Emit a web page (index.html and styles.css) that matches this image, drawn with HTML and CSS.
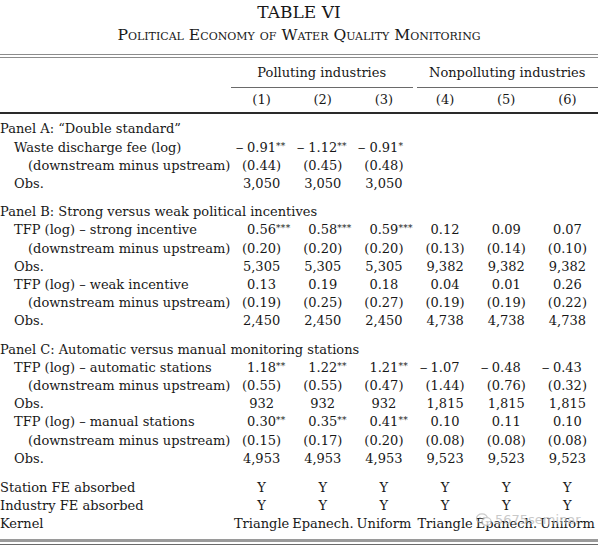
FILE: index.html
```html
<!DOCTYPE html>
<html>
<head>
<meta charset="utf-8">
<link rel="stylesheet" href="styles.css">
</head>
<body>
<div class="page">
  <div class="caption">TABLE VI</div>
  <div class="subtitle">Political Economy of Water Quality Monitoring</div>
  <table class="tbl">
    <colgroup>
      <col class="c-label"><col class="c-num"><col class="c-num"><col class="c-num"><col class="c-num"><col class="c-num"><col class="c-num">
    </colgroup>
    <thead>
      <tr class="grp">
        <th></th>
        <th colspan="3"><div class="grp-l">Polluting industries</div></th>
        <th colspan="3"><div class="grp-r">Nonpolluting industries</div></th>
      </tr>
      <tr class="nums">
        <th></th><th>(1)</th><th>(2)</th><th>(3)</th><th>(4)</th><th>(5)</th><th>(6)</th>
      </tr>
    </thead>
    <tbody>
      <tr class="panel first"><td colspan="7">Panel A: “Double standard”</td></tr>
      <tr><td class="l1">Waste discharge fee (log)</td><td><span class="m">–</span>0.91<span class="s">**</span></td><td><span class="m">–</span>1.12<span class="s">**</span></td><td><span class="m">–</span>0.91<span class="s">*</span></td><td></td><td></td><td></td></tr>
      <tr><td class="l2">(downstream minus upstream)</td><td>(0.44)</td><td>(0.45)</td><td>(0.48)</td><td></td><td></td><td></td></tr>
      <tr><td class="l1">Obs.</td><td>3,050</td><td>3,050</td><td>3,050</td><td></td><td></td><td></td></tr>

      <tr class="panel"><td colspan="7">Panel B: Strong versus weak political incentives</td></tr>
      <tr><td class="l1">TFP (log) – strong incentive</td><td>0.56<span class="s">***</span></td><td>0.58<span class="s">***</span></td><td>0.59<span class="s">***</span></td><td>0.12</td><td>0.09</td><td>0.07</td></tr>
      <tr><td class="l2">(downstream minus upstream)</td><td>(0.20)</td><td>(0.20)</td><td>(0.20)</td><td>(0.13)</td><td>(0.14)</td><td>(0.10)</td></tr>
      <tr><td class="l1">Obs.</td><td>5,305</td><td>5,305</td><td>5,305</td><td>9,382</td><td>9,382</td><td>9,382</td></tr>
      <tr><td class="l1">TFP (log) – weak incentive</td><td>0.13</td><td>0.19</td><td>0.18</td><td>0.04</td><td>0.01</td><td>0.26</td></tr>
      <tr><td class="l2">(downstream minus upstream)</td><td>(0.19)</td><td>(0.25)</td><td>(0.27)</td><td>(0.19)</td><td>(0.19)</td><td>(0.22)</td></tr>
      <tr><td class="l1">Obs.</td><td>2,450</td><td>2,450</td><td>2,450</td><td>4,738</td><td>4,738</td><td>4,738</td></tr>

      <tr class="panel"><td colspan="7">Panel C: Automatic versus manual monitoring stations</td></tr>
      <tr><td class="l1">TFP (log) – automatic stations</td><td>1.18<span class="s">**</span></td><td>1.22<span class="s">**</span></td><td>1.21<span class="s">**</span></td><td><span class="m">–</span>1.07</td><td><span class="m">–</span>0.48</td><td><span class="m">–</span>0.43</td></tr>
      <tr><td class="l2">(downstream minus upstream)</td><td>(0.55)</td><td>(0.55)</td><td>(0.47)</td><td>(1.44)</td><td>(0.76)</td><td>(0.32)</td></tr>
      <tr><td class="l1">Obs.</td><td>932</td><td>932</td><td>932</td><td>1,815</td><td>1,815</td><td>1,815</td></tr>
      <tr><td class="l1">TFP (log) – manual stations</td><td>0.30<span class="s">**</span></td><td>0.35<span class="s">**</span></td><td>0.41<span class="s">**</span></td><td>0.10</td><td>0.11</td><td>0.10</td></tr>
      <tr><td class="l2">(downstream minus upstream)</td><td>(0.15)</td><td>(0.17)</td><td>(0.20)</td><td>(0.08)</td><td>(0.08)</td><td>(0.08)</td></tr>
      <tr><td class="l1">Obs.</td><td>4,953</td><td>4,953</td><td>4,953</td><td>9,523</td><td>9,523</td><td>9,523</td></tr>

      <tr class="panel fe"><td>Station FE absorbed</td><td>Y</td><td>Y</td><td>Y</td><td>Y</td><td>Y</td><td>Y</td></tr>
      <tr><td>Industry FE absorbed</td><td>Y</td><td>Y</td><td>Y</td><td>Y</td><td>Y</td><td>Y</td></tr>
      <tr><td>Kernel</td><td>Triangle</td><td>Epanech.</td><td>Uniform</td><td>Triangle</td><td>Epanech.</td><td>Uniform</td></tr>
    </tbody>
  </table>
  <div class="bottom-rule"></div>
  <div class="watermark">
    <svg class="wm-icon" width="16" height="14" viewBox="0 0 16 14">
      <ellipse cx="6" cy="5.5" rx="5.5" ry="4.6" fill="none" stroke="#bbb" stroke-width="1.2"/>
      <ellipse cx="10.5" cy="8.5" rx="4.6" ry="3.9" fill="#fff" stroke="#bbb" stroke-width="1.2"/>
      <circle cx="4" cy="4.5" r="0.8" fill="#bbb"/><circle cx="8" cy="4.5" r="0.8" fill="#bbb"/>
    </svg>
    <span class="wm-text">5675seminar</span>
  </div>
</div>
</body>
</html>
```
FILE: styles.css
```css
html, body {
  margin: 0;
  padding: 0;
  background: #fff;
}
.page {
  position: relative;
  width: 598px;
  font-family: "DejaVu Serif", "Liberation Serif", serif;
  color: #181818;
  font-size: 13px;
}
.caption {
  padding-top: 2px;
  line-height: 20px;
  font-size: 17px;
  text-align: center;
}
.subtitle {
  margin-top: 3px;
  line-height: 20px;
  font-size: 15.6px;
  text-align: center;
  font-variant: small-caps;
}
.tbl {
  margin-top: 9px;
  width: 598px;
  border-collapse: collapse;
  table-layout: fixed;
  border-top: 4px double #8c8c8c;
}
.c-label { width: 231px; }
.c-num { width: 61.17px; }
.tbl th, .tbl td {
  padding: 0;
  font-weight: normal;
  line-height: 18.2px;
  white-space: nowrap;
  text-align: center;
}
.tbl td:first-child { text-align: left; }
.grp th { padding-top: 6px; }
.grp-l, .grp-r {
  padding-bottom: 5px;
  border-bottom: 1px solid #6a6a6a;
}
.grp-l { margin-right: 2px; }
.grp-r { margin-left: 2px; }
.nums th {
  padding-top: 3px;
  padding-bottom: 3px;
  border-bottom: 2px solid #2a2a2a;
}
.panel td { padding-top: 10px; }
.panel.first td { padding-top: 6px; }
.panel.fe td { padding-top: 11px; }
.l1 { padding-left: 14px !important; }
.l2 { padding-left: 28px !important; }
.m {
  display: inline-block;
  width: 0;
  text-indent: -0.95em;
  transform: scaleX(1.2);
  transform-origin: right center;
}
.s {
  display: inline-block;
  width: 0;
  font-size: 9px;
  vertical-align: 3px;
  line-height: 0;
  letter-spacing: 0.3px;
}
.bottom-rule {
  margin-top: 5px;
  height: 2px;
  border-top: 3px solid #9a9a9a;
  border-bottom: 1px solid #6a6a6a;
}
.watermark {
  position: absolute;
  left: 476px;
  top: 512px;
  display: flex;
  align-items: center;
  gap: 3px;
  opacity: 0.75;
}
.wm-text {
  font-family: "DejaVu Sans", sans-serif;
  font-size: 13px;
  color: #b8b8b8;
}
```
